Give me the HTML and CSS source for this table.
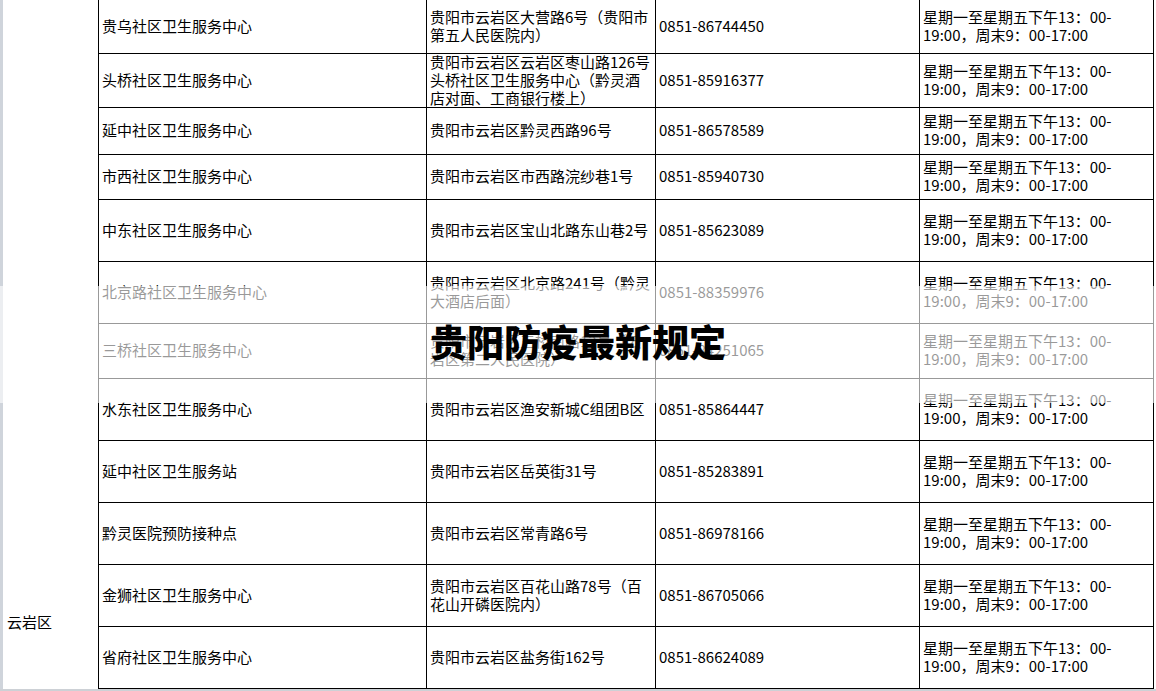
FILE: index.html
```html
<!DOCTYPE html>
<html lang="zh-CN">
<head>
<meta charset="utf-8">
<title>贵阳防疫最新规定</title>
<link rel="stylesheet" href="styles.css">
</head>
<body>
<div class="page">
  <div class="sheet">
    <div class="cell district">云岩区</div>

    <div class="cell">贵乌社区卫生服务中心</div>
    <div class="cell">贵阳市云岩区大营路6号（贵阳市<br>第五人民医院内）</div>
    <div class="cell">0851-86744450</div>
    <div class="cell">星期一至星期五下午13：00-<br>19:00，周末9：00-17:00</div>

    <div class="cell">头桥社区卫生服务中心</div>
    <div class="cell">贵阳市云岩区云岩区枣山路126号<br>头桥社区卫生服务中心（黔灵酒<br>店对面、工商银行楼上）</div>
    <div class="cell">0851-85916377</div>
    <div class="cell">星期一至星期五下午13：00-<br>19:00，周末9：00-17:00</div>

    <div class="cell">延中社区卫生服务中心</div>
    <div class="cell">贵阳市云岩区黔灵西路96号</div>
    <div class="cell">0851-86578589</div>
    <div class="cell">星期一至星期五下午13：00-<br>19:00，周末9：00-17:00</div>

    <div class="cell">市西社区卫生服务中心</div>
    <div class="cell">贵阳市云岩区市西路浣纱巷1号</div>
    <div class="cell">0851-85940730</div>
    <div class="cell">星期一至星期五下午13：00-<br>19:00，周末9：00-17:00</div>

    <div class="cell">中东社区卫生服务中心</div>
    <div class="cell">贵阳市云岩区宝山北路东山巷2号</div>
    <div class="cell">0851-85623089</div>
    <div class="cell">星期一至星期五下午13：00-<br>19:00，周末9：00-17:00</div>

    <div class="cell">北京路社区卫生服务中心</div>
    <div class="cell">贵阳市云岩区北京路241号（黔灵<br>大酒店后面）</div>
    <div class="cell">0851-88359976</div>
    <div class="cell">星期一至星期五下午13：00-<br>19:00，周末9：00-17:00</div>

    <div class="cell">三桥社区卫生服务中心</div>
    <div class="cell">贵阳市云岩区三桥南路12号（云<br>岩区第二人民医院）</div>
    <div class="cell">0851-84251065</div>
    <div class="cell">星期一至星期五下午13：00-<br>19:00，周末9：00-17:00</div>

    <div class="cell">水东社区卫生服务中心</div>
    <div class="cell">贵阳市云岩区渔安新城C组团B区</div>
    <div class="cell">0851-85864447</div>
    <div class="cell">星期一至星期五下午13：00-<br>19:00，周末9：00-17:00</div>

    <div class="cell">延中社区卫生服务站</div>
    <div class="cell">贵阳市云岩区岳英街31号</div>
    <div class="cell">0851-85283891</div>
    <div class="cell">星期一至星期五下午13：00-<br>19:00，周末9：00-17:00</div>

    <div class="cell">黔灵医院预防接种点</div>
    <div class="cell">贵阳市云岩区常青路6号</div>
    <div class="cell">0851-86978166</div>
    <div class="cell">星期一至星期五下午13：00-<br>19:00，周末9：00-17:00</div>

    <div class="cell">金狮社区卫生服务中心</div>
    <div class="cell">贵阳市云岩区百花山路78号（百<br>花山开磷医院内）</div>
    <div class="cell">0851-86705066</div>
    <div class="cell">星期一至星期五下午13：00-<br>19:00，周末9：00-17:00</div>

    <div class="cell">省府社区卫生服务中心</div>
    <div class="cell">贵阳市云岩区盐务街162号</div>
    <div class="cell">0851-86624089</div>
    <div class="cell">星期一至星期五下午13：00-<br>19:00，周末9：00-17:00</div>
  </div>
  <div class="banner"><h1 class="banner-title">贵阳防疫最新规定</h1></div>
</div>
</body>
</html>
```

FILE: styles.css
```css
html, body {
  margin: 0;
  padding: 0;
}
body {
  background: #cdd1d6;
  width: 1156px;
  height: 691px;
  overflow: hidden;
  font-family: "Noto Sans CJK SC", "Noto Sans", sans-serif;
  color: #000;
}
.page {
  position: relative;
  width: 1156px;
  height: 689px;
  background: #fff;
}
.sheet {
  display: grid;
  grid-template-columns: 99px 328px 229px 264px 234px;
  grid-template-rows: 54px 54px 47px 45px 62px 62px 55px 62px 62px 62px 62px 62px;
  width: 1154px;
}
.cell {
  box-sizing: border-box;
  border-right: 1px solid #000;
  border-bottom: 1px solid #000;
  display: flex;
  align-items: center;
  padding: 0 2px 2px 3px;
  font-size: 15px;
  line-height: 18px;
  white-space: nowrap;
}
.district {
  grid-column: 1;
  grid-row: 1 / -1;
  border-bottom: none;
  border-left: 3px solid #cfd4db;
  align-items: flex-end;
  padding: 0 0 58px 4px;
}
.banner {
  position: absolute;
  left: 0;
  top: 286px;
  width: 1156px;
  height: 117px;
  background: rgba(255, 255, 255, 0.6);
  display: flex;
  align-items: center;
  justify-content: center;
}
.banner-title {
  margin: 0 0 8px 0;
  font-size: 37px;
  line-height: 40px;
  font-weight: 900;
  color: #000;
  letter-spacing: 0;
}
```
